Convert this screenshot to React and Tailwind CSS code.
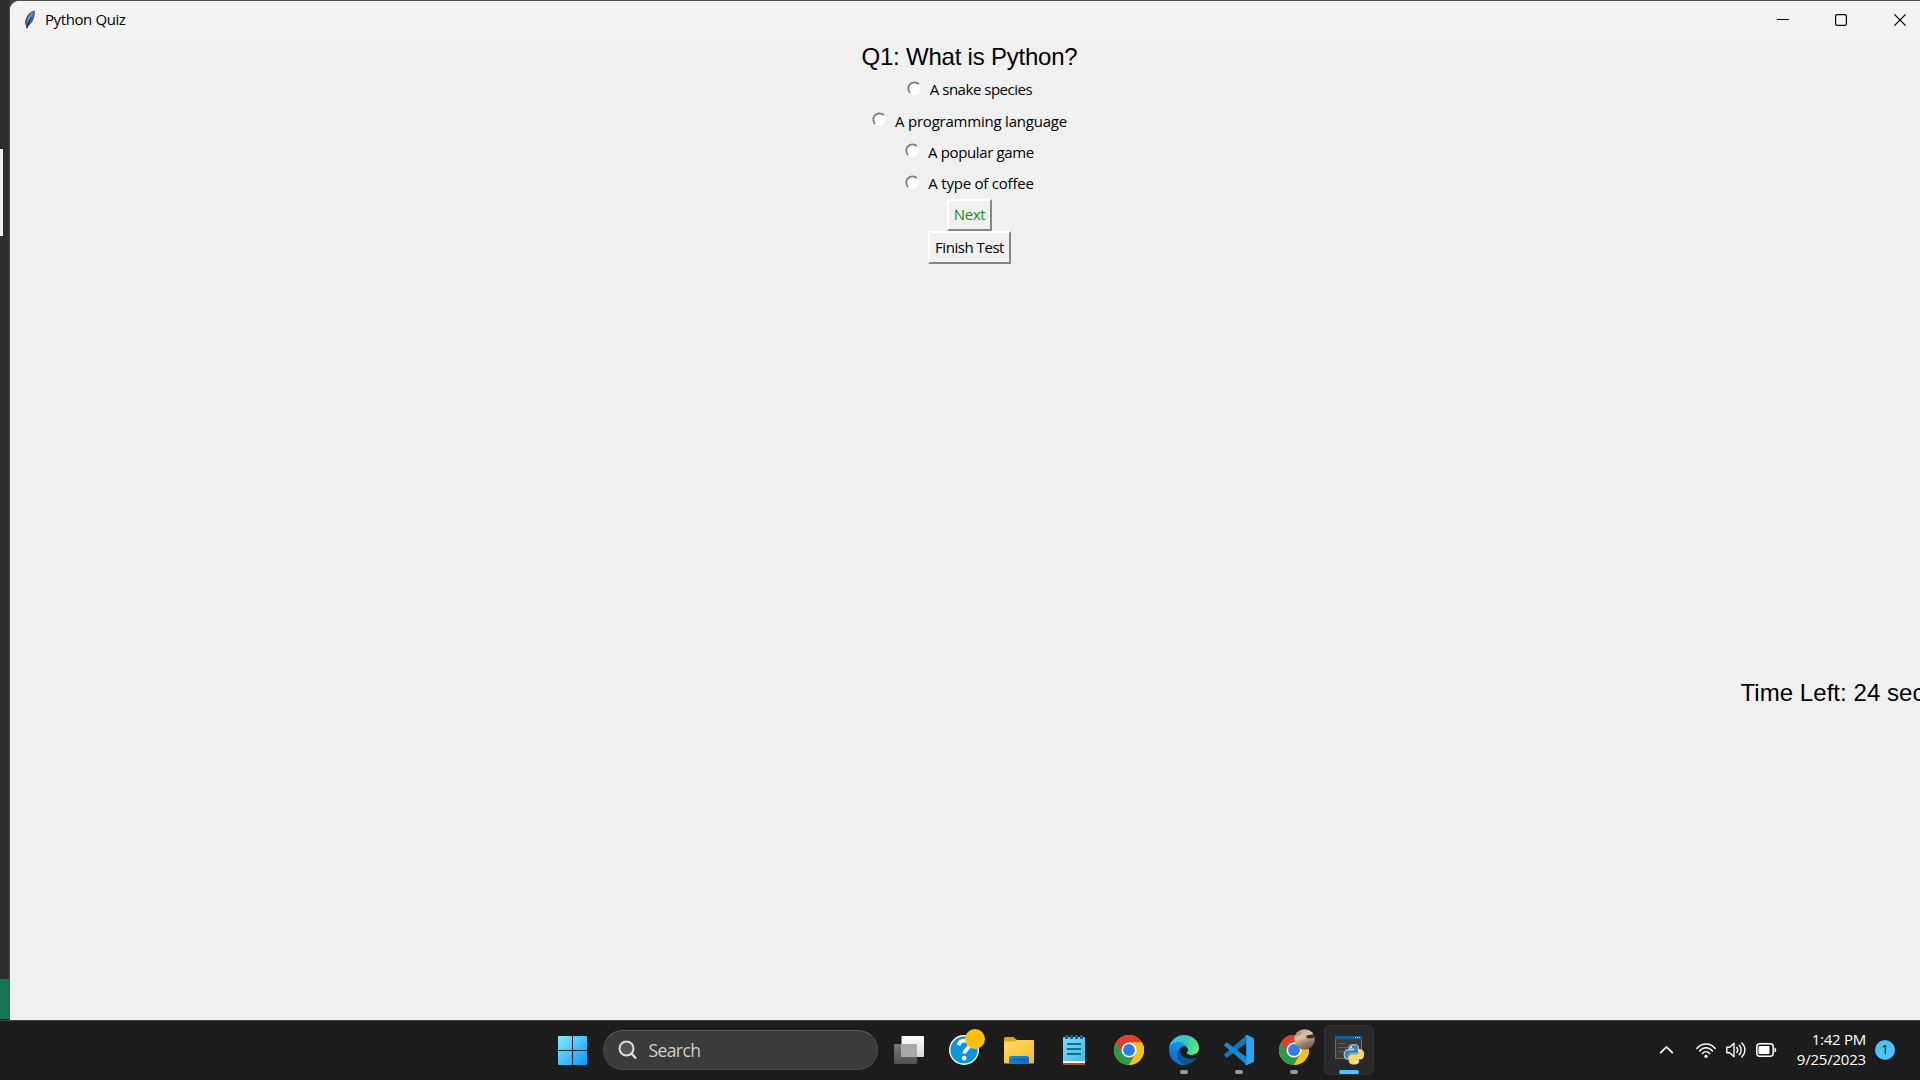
const options = [
  { label: "A snake species", cls: "tracking-[-0.48px]" },
  { label: "A programming language", cls: "tracking-[-0.22px]" },
  { label: "A popular game", cls: "tracking-[-0.36px]" },
  { label: "A type of coffee", cls: "tracking-[-0.22px]" },
];

function Feather() {
  return (
    <svg className="h-5 w-3" viewBox="0 0 12 20">
      <path d="M10.800 .5C6 1.300 2 6 .8 12.500L2 16l.900 3.500 .9-3C8 14 11.500 7 10.800.5Z" fill="#565b60" />
      <path d="M9.800 1.800C6.500 3.500 3.300 8 2.600 12.500l1.600 1.500C7.500 12 9.800 7 9.800 1.800Z" fill="#3b7ac8" />
      <path d="M9 2.500C6.500 4.500 4.500 7 3.500 11c1.500-1.800 3-4 3.600-5.500Z" fill="#7db0ee" />
      <path d="M7.500 7.500C6.500 9.500 4.500 12 3 18" stroke="#10151c" strokeWidth="1" fill="none" />
    </svg>
  );
}

function Radio() {
  return (
    <svg className="-mt-px h-[15px] w-[15px] shrink-0" viewBox="0 0 15 15">
      <circle cx="7.500" cy="7.500" r="6.400" fill="#fff" />
      <path d="M3.100 11.900A6.200 6.200 0 0 1 11.900 3.100" stroke="#7c7c7c" strokeWidth="1.800" fill="none" />
    </svg>
  );
}

function Chrome() {
  return (
    <svg className="h-[30px] w-[30px]" viewBox="0 0 48 48">
      <circle cx="24" cy="24" r="24" fill="#fbc116" />
      <path d="M3.200 12A24 24 0 0 0 24 48L34.400 30 24 24Z" fill="#2b9a48" />
      <path d="M3.200 12A24 24 0 0 1 44.800 12H24L13.600 30Z" fill="#e33b2e" />
      <path d="M24 12H44.800A24 24 0 0 1 24 48L34.400 30Z" fill="#fbc116" />
      <circle cx="24" cy="24" r="12" fill="#fff" />
      <circle cx="24" cy="24" r="9.500" fill="#2f7cf0" />
    </svg>
  );
}

function Edge() {
  return (
    <svg className="h-[30px] w-[30px]" viewBox="0 0 256 256">
      <defs>
        <linearGradient id="edgeNavy" x1="60" y1="177" x2="240" y2="177" gradientUnits="userSpaceOnUse">
          <stop offset="0" stopColor="#0c59a4" />
          <stop offset="1" stopColor="#114a8b" />
        </linearGradient>
        <linearGradient id="edgeBlue" x1="150" y1="90" x2="40" y2="230" gradientUnits="userSpaceOnUse">
          <stop offset="0" stopColor="#1b9de2" />
          <stop offset=".6" stopColor="#0d7fdc" />
          <stop offset="1" stopColor="#1467c6" />
        </linearGradient>
        <linearGradient id="edgeGreen" x1="10" y1="60" x2="250" y2="130" gradientUnits="userSpaceOnUse">
          <stop offset="0" stopColor="#35c1f1" />
          <stop offset=".5" stopColor="#36c7b8" />
          <stop offset="1" stopColor="#66eb6e" />
        </linearGradient>
      </defs>
      <path d="M231 190a94 94 0 0 1-11 5 102 102 0 0 1-36 6c-47 0-88-32-88-74a31 31 0 0 1 16-27c-43 2-54 46-54 72 0 74 68 81 82 81 8 0 20-2 27-4l1-1a128 128 0 0 0 67-53 4 4 0 0 0-4-5Z" fill="url(#edgeNavy)" />
      <path d="M106 241a79 79 0 0 1-23-21 81 81 0 0 1 29-120c3-2 9-4 16-4a33 33 0 0 1 26 13 33 33 0 0 1 7 20c0-1 25-80-81-80C35 49 0 91 0 128a130 130 0 0 0 12 56 128 128 0 0 0 156 67 75 75 0 0 1-62-10Z" fill="url(#edgeBlue)" />
      <path d="M152 149c-1 1-3 3-3 6 0 3 2 6 5 8 14 10 41 8 41 8a59 59 0 0 0 30-8 61 61 0 0 0 31-53c0-23-8-38-11-44C223 24 177 0 128 0A128 128 0 0 0 0 126c1-37 37-66 80-66 4 0 24 0 42 10 16 8 25 19 31 29 6 11 7 24 7 30 0 5-2 13-8 20Z" fill="url(#edgeGreen)" />
      <path d="M152 149c-1 1-3 3-3 6 0 3 2 6 5 8 14 10 41 8 41 8a59 59 0 0 0 30-8l6 27a94 94 0 0 1-47 11c-47 0-88-32-88-74a31 31 0 0 1 16-27c3-2 9-4 16-4a33 33 0 0 1 26 13 33 33 0 0 1 6 20c0 5-2 13-8 20Z" fill="#1c1c1c" />
    </svg>
  );
}

function VSCode() {
  return (
    <svg className="h-[30px] w-[30px]" viewBox="0 0 100 100">
      <path d="M74 2v25L12 74c-2 1-4 1-5 0l-5-5c-2-2-2-4 0-6Z" fill="#1377bd" />
      <path d="M74 98V73L12 26c-2-1-4-1-5 0l-5 5c-2 2-2 4 0 6Z" fill="#1b87d0" />
      <path d="M71 99c-4-3 3 0 3-6V7c0-6-7-7-3-6l6-1 19 9c3 1 4 4 4 6v70c0 3-1 5-4 6l-19 9Z" fill="#2aa5f2" />
    </svg>
  );
}

function PythonConsole() {
  return (
    <svg className="h-[30px] w-[30px]" viewBox="0 0 30 30">
      <rect x="1" y="1" width="27" height="23" fill="#6b6b6b" />
      <rect x="2" y="4" width="25" height="19" fill="#3b3b3b" />
      <rect x="1" y="1" width="27" height="3" fill="#0b63a5" />
      <path d="M21 2.500h1M23 2.500h1M25 2.500h1" stroke="#cfe4f5" strokeWidth="1" />
      <path d="M4 8.500h7M4 12.500h10M4 16.500h6" stroke="#3d7a3c" strokeWidth="1" />
      <g transform="translate(10.200 9.700) scale(.176)">
        <path d="M54 0C26 0 28 12 28 12v13h27v4H17S0 27 0 55s15 27 15 27h11V67s-1-15 15-15h26s14 0 14-14V14S84 0 54 0Z" fill="#3f83bd" stroke="#e9e9e9" strokeWidth="5" />
        <path d="M56 110c28 0 26-12 26-12V85H55v-4h38s17 2 17-26-15-27-15-27H84v15s1 15-15 15H43s-14 0-14 14v24s-3 14 27 14Z" fill="#ffd94f" stroke="#eee6c8" strokeWidth="5" />
        <circle cx="40" cy="14" r="5" fill="#fff" />
        <circle cx="70" cy="96" r="5" fill="#fff" />
      </g>
    </svg>
  );
}

function Avatar() {
  return (
    <svg className="absolute left-[27px] top-[4px] h-[21px] w-[21px]" viewBox="0 0 21 21">
      <defs>
        <linearGradient id="avatar" x1=".2" y1="0" x2=".6" y2="1">
          <stop stopColor="#a89c8c" />
          <stop offset=".4" stopColor="#d8c6a6" />
          <stop offset=".7" stopColor="#94826b" />
          <stop offset="1" stopColor="#6b5a48" />
        </linearGradient>
        <clipPath id="avatarClip"><circle cx="10.500" cy="10.500" r="10.300" /></clipPath>
      </defs>
      <g clipPath="url(#avatarClip)">
        <rect width="21" height="21" fill="url(#avatar)" />
        <path d="M12 0H21V5L16 4Z" fill="#d9c9ac" />
        <path d="M12 7C14 5.500 18 6 21 5V8.500L16 9.500 13 9Z" fill="#3c2c24" />
        <path d="M0 4 8 3 6 6 0 7Z" fill="#a0937f" />
      </g>
    </svg>
  );
}

function Slot({ children, mark }) {
  return (
    <div className="relative flex h-[50px] w-[55px] items-center justify-center">
      {children}
      {mark && <span className="absolute bottom-px left-1/2 h-1 w-2 -translate-x-1/2 rounded-full bg-[#9a9a9a]" />}
    </div>
  );
}

function TaskView() {
  return (
    <svg className="h-7 w-[30px]" viewBox="0 0 30 28">
      <defs>
        <linearGradient id="tvWhite" x1="0" y1="0" x2="0" y2="1"><stop stopColor="#fff" /><stop offset="1" stopColor="#d8d8d8" /></linearGradient>
        <linearGradient id="tvGray" x1="0" y1="0" x2="0" y2="1"><stop stopColor="#777" /><stop offset="1" stopColor="#505050" /></linearGradient>
      </defs>
      <rect x="0" y="8" width="23" height="20" rx="1" fill="url(#tvGray)" />
      <rect x="7.500" y="0" width="22.500" height="21" rx="1" fill="url(#tvWhite)" />
      <rect x="7.500" y="8" width="15.500" height="13" fill="#a9a9a9" />
    </svg>
  );
}

function Help() {
  return (
    <svg className="h-[30px] w-[30px] overflow-visible" viewBox="0 0 30 30">
      <circle cx="15" cy="15" r="14.300" fill="#0a96d8" stroke="#fff" strokeWidth="1.400" />
      <path d="M9.700 10.300c.6-3.200 2.800-4.600 5.500-4.600 3 0 5.200 1.700 5.200 4.500 0 3.600-5.100 4-5.100 8.300" stroke="#fff" strokeWidth="3.800" fill="none" />
      <circle cx="15.200" cy="23.200" r="2.400" fill="#fff" />
      <circle cx="26" cy="4" r="10" fill="#ffbf0b" />
    </svg>
  );
}

function Folder() {
  return (
    <svg className="h-[30px] w-[30px]" viewBox="0 0 30 30">
      <defs>
        <linearGradient id="fold" x1="0" y1="0" x2="1" y2="1"><stop stopColor="#ffdc6a" /><stop offset="1" stopColor="#fbb91a" /></linearGradient>
        <linearGradient id="foldBlue" x1="0" y1="0" x2="1" y2="1"><stop stopColor="#1690e0" /><stop offset="1" stopColor="#0a66bd" /></linearGradient>
      </defs>
      <path d="M0 3.500Q0 2 1.500 2H9.500L13 5H28.500Q30 5 30 6.500V12H0Z" fill="#e2a30c" />
      <path d="M0 6.500H10.500L13 5H29Q30 5 30 6.500V27.500Q30 28.500 29 28.500H1Q0 28.500 0 27.500Z" fill="url(#fold)" />
      <path d="M5 28.500V23Q5 21 7 21H23Q25 21 25 23V28.500Z" fill="url(#foldBlue)" />
      <path d="M8.500 24.500H21.500" stroke="#0b4f91" strokeWidth="1.200" />
    </svg>
  );
}

function Notepad() {
  return (
    <svg className="h-[30px] w-[22px]" viewBox="0 0 22 30">
      <defs><linearGradient id="note" x1="0" y1="0" x2="1" y2="1"><stop stopColor="#7ddcf3" /><stop offset="1" stopColor="#45bbdf" /></linearGradient></defs>
      <rect x="0" y="26" width="22" height="4" rx="1" fill="#a5541b" />
      <rect x="0" y="25" width="22" height="3" fill="#fff" />
      <rect x="0" y="2" width="22" height="24" rx="1" fill="url(#note)" />
      <path d="M4 9h14M4 14h14M4 19h14" stroke="#0a6d92" strokeWidth="1.800" />
      <path d="M3.500 0v4M8.500 0v4M13.500 0v4M18.500 0v4" stroke="#0d6788" strokeWidth="3" />
    </svg>
  );
}

function Windows() {
  return (
    <svg className="h-[29px] w-[29px]" viewBox="0 0 29 29">
      <defs><linearGradient id="win" x1="0" y1="0" x2="29" y2="29" gradientUnits="userSpaceOnUse"><stop stopColor="#7df2ff" /><stop offset="1" stopColor="#0a94ff" /></linearGradient></defs>
      <path d="M0 1Q0 0 1 0H14V14H0ZM15 0H28Q29 0 29 1V14H15ZM0 15H14V29H1Q0 29 0 28ZM15 15H29V28Q29 29 28 29H15Z" fill="url(#win)" />
    </svg>
  );
}

function Tray() {
  return (
    <div className="ml-auto flex items-center pr-[25px] text-white">
      <svg className="h-[10px] w-[15px]" viewBox="0 0 15 10"><path d="M1.200 8.200 7.500 2 13.800 8.200" stroke="#fff" strokeWidth="1.700" fill="none" /></svg>
      <svg className="ml-[22px] h-[17px] w-5" viewBox="0 0 20 17" fill="none" stroke="#fff" strokeWidth="1.400" strokeLinecap="round">
        <path d="M.8 6.500C5.500 .500 14.500 .500 19.200 6.500M3.600 9C7 4.600 13 4.600 16.400 9M6.400 11.500C8.400 9 11.600 9 13.600 11.500" />
        <circle cx="10" cy="14.300" r="1.600" fill="#fff" stroke="none" />
      </svg>
      <svg className="ml-[10px] h-[18px] w-5" viewBox="0 0 20 18" fill="none" stroke="#fff" strokeWidth="1.400" strokeLinecap="round" strokeLinejoin="round">
        <path d="M.8 6.200H3.800L8 2.300V15.700L3.800 11.800H.8ZM10.800 6.500C12 8 12 10 10.800 11.500M13.300 4.300C15.800 7 15.800 11 13.300 13.700M15.900 2C19.900 6 19.900 12 15.900 16" />
      </svg>
      <svg className="ml-[10px] h-[14px] w-[21px]" viewBox="0 0 21 14">
        <rect x=".8" y=".8" width="16.400" height="12.400" rx="3" fill="none" stroke="#fff" strokeWidth="1.500" />
        <rect x="2.500" y="3" width="11" height="8" rx="1" fill="#fff" />
        <path d="M18.500 4.500Q20.300 5 20.300 7T18.500 9.500Z" fill="#fff" />
      </svg>
      <div className="-mt-[2px] ml-[10px] w-[79px] whitespace-nowrap text-right leading-5">
        <div className="tracking-[-0.25px]">1:42 PM</div>
        <div className="tracking-[-0.2px]">9/25/2023</div>
      </div>
      <span className="ml-[9px] flex h-5 w-5 items-center justify-center rounded-full bg-[#4cc2ff] text-[12px] leading-none text-black">1</span>
    </div>
  );
}

export default function App() {
  return (
    <div className="flex h-[1080px] w-[1920px] flex-col overflow-hidden bg-[#3a3a3a] font-['Open_Sans','Noto_Sans',sans-serif] text-[15px] text-black">
      <div className="flex h-[1020px]">
        <aside className="flex w-[9px] shrink-0 flex-col justify-between bg-[#2e2e2e] pt-[149px]">
          <div className="h-[87px] w-[3px] bg-[#f0f0f0]" />
          <div className="h-[41px] border-b border-[#10271f] bg-[#177553]" />
        </aside>
        <main className="flex min-w-0 flex-1 flex-col overflow-hidden rounded-tl-[10px] border-l border-t border-[#4f4f4f] bg-[#f0f0f0]">
          <header className="flex h-[38px] shrink-0 items-center bg-[#f3f3f3] pl-[14px]">
            <Feather />
            <span className="-mt-[2px] ml-[9px] whitespace-nowrap tracking-[-0.4px]">Python Quiz</span>
            <div className="ml-auto flex items-center pr-[14px]">
              <svg className="h-3 w-3" viewBox="0 0 12 12"><path d="M0 5.500H12" stroke="#000" /></svg>
              <svg className="ml-[46px] h-3 w-3" viewBox="0 0 12 12"><rect x=".6" y=".6" width="10.800" height="10.800" rx="1.500" fill="none" stroke="#000" strokeWidth="1.200" /></svg>
              <svg className="ml-[47px] h-3 w-3" viewBox="0 0 12 12"><path d="M.4.400 11.600 11.600M11.600.400.400 11.600" stroke="#000" strokeWidth="1.200" /></svg>
            </div>
          </header>
          <section className="flex h-[637.5px] w-[1919px] shrink-0 flex-col items-center">
            <h1 className="mt-px h-[33.5px] whitespace-nowrap font-['Liberation_Sans',Arial,sans-serif] text-2xl leading-[33px] tracking-[-0.22px]">Q1: What is Python?</h1>
            {options.map((o) => (
              <label key={o.label} className="flex h-[31.2px] items-center">
                <Radio />
                <span className={"ml-[8px] mt-px whitespace-nowrap " + o.cls}>{o.label}</span>
              </label>
            ))}
            <button className="mt-[0.7px] flex h-8 w-[45px] justify-center whitespace-nowrap border-2 border-b-[#868686] border-l-white border-r-[#868686] border-t-white pt-[3px] leading-[20px] tracking-[-0.3px] text-[#1a8a1a]">Next</button>
            <button className="flex h-[33px] w-[83px] justify-center whitespace-nowrap border-2 border-b-[#868686] border-l-white border-r-[#868686] border-t-white pt-[4px] leading-[20px] tracking-[-0.45px]">Finish Test</button>
          </section>
          <p className="ml-[1730.5px] whitespace-nowrap font-['Liberation_Sans',Arial,sans-serif] text-2xl tracking-[0.05px]">Time Left: 24 seconds</p>
        </main>
      </div>
      <footer className="flex h-[60px] items-center border-t border-[#444] bg-[#1c1c1c] pb-px">
        <div className="ml-[558px]"><Windows /></div>
        <div className="ml-4 flex h-10 w-[275px] items-center rounded-full border border-[#4a4a4a] border-t-[#5e5e5e] bg-[#3b3b3b] pl-[14px] text-[#cfcfcf]">
          <svg className="h-5 w-5" viewBox="0 0 20 20"><circle cx="8.500" cy="8.500" r="7" fill="#555" stroke="#ddd" strokeWidth="2" /><path d="M13.500 13.500 18 18.500" stroke="#ddd" strokeWidth="2.400" /></svg>
          <span className="ml-[10.5px] text-[17.5px] tracking-[-0.6px]">Search</span>
        </div>
        <nav className="ml-[3.5px] flex">
          <Slot><TaskView /></Slot>
          <Slot><Help /></Slot>
          <Slot><Folder /></Slot>
          <Slot><Notepad /></Slot>
          <Slot><Chrome /></Slot>
          <Slot mark><Edge /></Slot>
          <Slot mark><VSCode /></Slot>
          <Slot mark><Chrome /><Avatar /></Slot>
          <div className="relative ml-[2.5px] flex h-[50px] w-[50px] items-center justify-center rounded-[5px] border border-[#333] bg-[#292929]">
            <PythonConsole />
            <span className="absolute bottom-0 left-1/2 h-1 w-5 -translate-x-1/2 rounded-full bg-[#4cc2ff]" />
          </div>
        </nav>
        <Tray />
      </footer>
    </div>
  );
}
